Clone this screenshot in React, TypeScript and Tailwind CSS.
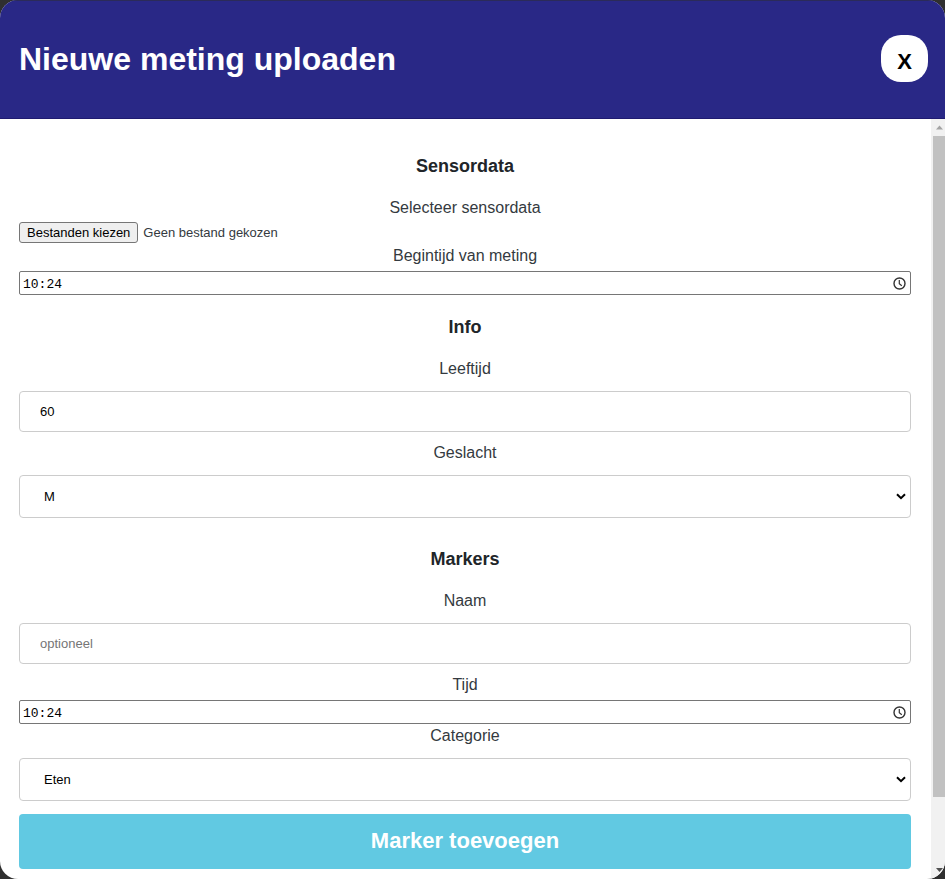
import { useState, type ReactNode } from "react";

function SectionTitle({ children }: { children: ReactNode }) {
  return (
    <h2 className="mb-[17px] text-center text-lg leading-[26px] font-bold text-[#212529]">{children}</h2>
  );
}

function FieldLabel({ htmlFor, children }: { htmlFor: string; children: ReactNode }) {
  return (
    <label htmlFor={htmlFor} className="block text-center text-base leading-6 text-[#343a40]">
      {children}
    </label>
  );
}

function TimeField({ id }: { id: string }) {
  const [value, setValue] = useState("10:24");
  return (
    <div className="mt-[3px] flex h-6 items-center rounded-[2px] border border-[#767676] bg-white pr-1 pl-[3px]">
      <input
        id={id}
        type="text"
        inputMode="numeric"
        value={value}
        onChange={(e) => setValue(e.target.value)}
        className="h-[22px] min-w-0 flex-1 bg-transparent pt-[3px] font-['Liberation_Mono',monospace] text-[13px] text-black outline-none"
      />
      <svg viewBox="0 0 13 13" className="size-[13px]" fill="none" stroke="#333" aria-hidden="true">
        <circle cx="6.5" cy="6.5" r="5.5" strokeWidth="1.4" />
        <path d="M6.3 3v3.700l2.500 2" strokeWidth="1.2" />
      </svg>
    </div>
  );
}

function TextField({ id, value, placeholder }: { id: string; value?: string; placeholder?: string }) {
  return (
    <input
      id={id}
      type="text"
      defaultValue={value}
      placeholder={placeholder}
      className="mt-2.5 block h-[41px] w-full rounded border border-[#ccc] bg-white px-5 text-[13px] text-black placeholder:text-[#757575]"
    />
  );
}

function SelectField({ id, options }: { id: string; options: string[] }) {
  return (
    <div className="mt-2.5 grid items-center">
      <select
        id={id}
        className="col-start-1 row-start-1 h-[43px] w-full appearance-none rounded border border-[#ccc] bg-white px-6 text-[13px] text-black"
      >
        {options.map((option) => (
          <option key={option}>{option}</option>
        ))}
      </select>
      <svg
        viewBox="0 0 10 7"
        className="pointer-events-none col-start-1 row-start-1 mr-[5px] h-[7px] w-2.5 justify-self-end"
        fill="none"
        stroke="#000"
        strokeWidth="2"
        aria-hidden="true"
      >
        <path d="M1 1.2l4 4 4-4" />
      </svg>
    </div>
  );
}

function ScrollTrack() {
  return (
    <div className="flex w-3.5 shrink-0 flex-col items-end bg-[#f1f1f1]" aria-hidden="true">
      <svg viewBox="0 0 14 17" className="h-[17px] w-3.5 shrink-0">
        <path d="M5 10.5h7L8.500 6.500z" fill="#a3a3a3" />
      </svg>
      <div className="w-3 flex-[662] bg-[#c1c1c1]" />
      <div className="flex-[65]" />
      <svg viewBox="0 0 14 17" className="h-[17px] w-3.5 shrink-0">
        <path d="M5 6h7l-3.500 4z" fill="#505050" />
      </svg>
    </div>
  );
}

export default function App() {
  const [fileName, setFileName] = useState("Geen bestand gekozen");
  return (
    <div className="h-screen bg-[#2f2f2f] font-['Liberation_Sans',Arial,sans-serif]">
      <div role="dialog" aria-labelledby="title" className="flex h-full flex-col overflow-hidden rounded-[18px] bg-white">
        <header className="flex h-[119px] shrink-0 items-center justify-between border-y border-t-[#2b2b59] border-b-[#1f1b70] bg-[#292886] pr-[17px] pb-0.5 pl-[19px]">
          <h1 id="title" className="text-[32px] leading-10 font-bold text-white">
            Nieuwe meting uploaden
          </h1>
          <button
            type="button"
            aria-label="Sluiten"
            className="size-[47px] rounded-[20px] bg-white pt-1.5 text-[22px] font-bold text-black"
          >
            X
          </button>
        </header>
        <div className="flex min-h-0 flex-1">
          <form className="min-w-0 flex-1 overflow-y-auto pt-[34px] pr-5 pb-2.5 pl-[19px] [scrollbar-width:none]">
            <section>
              <SectionTitle>Sensordata</SectionTitle>
              <FieldLabel htmlFor="sensor">Selecteer sensordata</FieldLabel>
              <div className="mt-0.5 mb-px flex items-center text-[13px]">
                <input
                  id="sensor"
                  type="file"
                  multiple
                  className="peer sr-only"
                  onChange={(e) => setFileName(e.target.files?.[0]?.name ?? "Geen bestand gekozen")}
                />
                <label
                  htmlFor="sensor"
                  className="flex h-[21px] items-center rounded-[3px] border border-[#767676] bg-[#efefef] px-[7px] text-black"
                >
                  Bestanden kiezen
                </label>
                <span className="ml-[5px] text-[#343a40]">{fileName}</span>
              </div>
              <FieldLabel htmlFor="start">Begintijd van meting</FieldLabel>
              <TimeField id="start" />
            </section>
            <section className="mt-[19px]">
              <SectionTitle>Info</SectionTitle>
              <FieldLabel htmlFor="age">Leeftijd</FieldLabel>
              <TextField id="age" value="60" />
              <div className="mt-[9px]">
                <FieldLabel htmlFor="sex">Geslacht</FieldLabel>
                <SelectField id="sex" options={["M", "V"]} />
              </div>
            </section>
            <section className="mt-7">
              <SectionTitle>Markers</SectionTitle>
              <FieldLabel htmlFor="name">Naam</FieldLabel>
              <TextField id="name" placeholder="optioneel" />
              <div className="mt-[9px]">
                <FieldLabel htmlFor="time">Tijd</FieldLabel>
                <TimeField id="time" />
              </div>
              <FieldLabel htmlFor="category">Categorie</FieldLabel>
              <SelectField id="category" options={["Eten", "Slapen", "Sport"]} />
              <button
                type="button"
                className="mt-[13px] h-[55px] w-full rounded bg-[#61c9e2] pb-0.5 text-[22px] font-bold text-white"
              >
                Marker toevoegen
              </button>
            </section>
          </form>
          <ScrollTrack />
        </div>
      </div>
    </div>
  );
}
